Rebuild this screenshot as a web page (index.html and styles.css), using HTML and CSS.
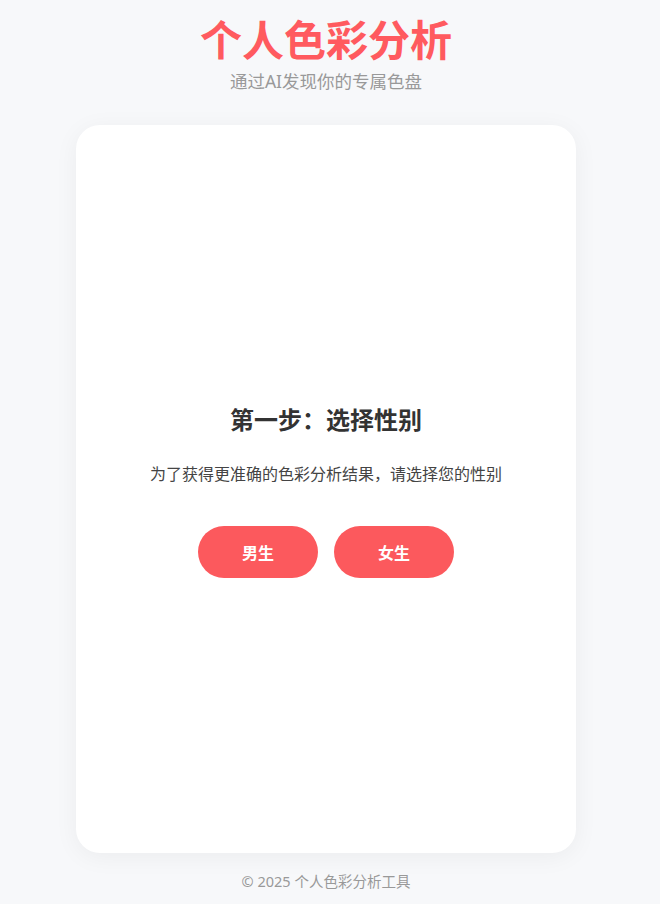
FILE: index.html
```html
<!DOCTYPE html>
<html lang="zh-CN">
<head>
    <meta charset="UTF-8">
    <meta name="viewport" content="width=device-width, initial-scale=1.0">
    <title>个人色彩分析</title>
    <link rel="stylesheet" href="styles.css">
</head>
<body>
    <div class="page">
        <header class="header">
            <h1>个人色彩分析</h1>
            <p class="subtitle">通过AI发现你的专属色盘</p>
        </header>

        <main class="card">
            <div class="step">
                <h2>第一步：选择性别</h2>
                <p class="hint">为了获得更准确的色彩分析结果，请选择您的性别</p>
                <div class="choices">
                    <button type="button" class="btn">男生</button>
                    <button type="button" class="btn">女生</button>
                </div>
            </div>
        </main>

        <footer class="footer">© 2025 个人色彩分析工具</footer>
    </div>
</body>
</html>
```

FILE: styles.css
```css
body {
    font-family: "Noto Sans", "Noto Sans CJK SC", sans-serif;
    margin: 0;
    padding: 0;
    background-color: #f7f8fa;
    color: #333;
}

.page {
    width: 652px;
    display: flex;
    flex-direction: column;
    align-items: center;
}

.header {
    text-align: center;
    padding-top: 14px;
}

.header h1 {
    margin: 0;
    font-size: 42px;
    line-height: 52px;
    font-weight: 700;
    color: #ff5a5f;
}

.subtitle {
    margin: 2px 0 0;
    font-size: 17.5px;
    line-height: 26px;
    color: #999;
}

.card {
    width: 500px;
    height: 728px;
    margin-top: 31px;
    background: #ffffff;
    border-radius: 24px;
    box-shadow: 0 4px 24px rgba(0, 0, 0, 0.05);
    display: flex;
    align-items: center;
    justify-content: center;
}

.step {
    text-align: center;
    padding-top: 4px;
}

.step h2 {
    margin: 0;
    font-size: 24px;
    line-height: 32px;
    font-weight: 700;
    color: #333;
}

.hint {
    margin: 26px 0 0;
    font-size: 16px;
    line-height: 24px;
    color: #444;
}

.choices {
    display: flex;
    justify-content: center;
    gap: 16px;
    margin-top: 40px;
}

.btn {
    width: 120px;
    height: 52px;
    border: none;
    border-radius: 26px;
    background-color: #fc595d;
    color: #ffffff;
    font-family: inherit;
    font-size: 16px;
    font-weight: 700;
    cursor: pointer;
}

.btn:hover {
    background-color: #e94a4f;
}

.footer {
    margin-top: 18px;
    font-size: 14.5px;
    line-height: 20px;
    color: #999;
}
```
